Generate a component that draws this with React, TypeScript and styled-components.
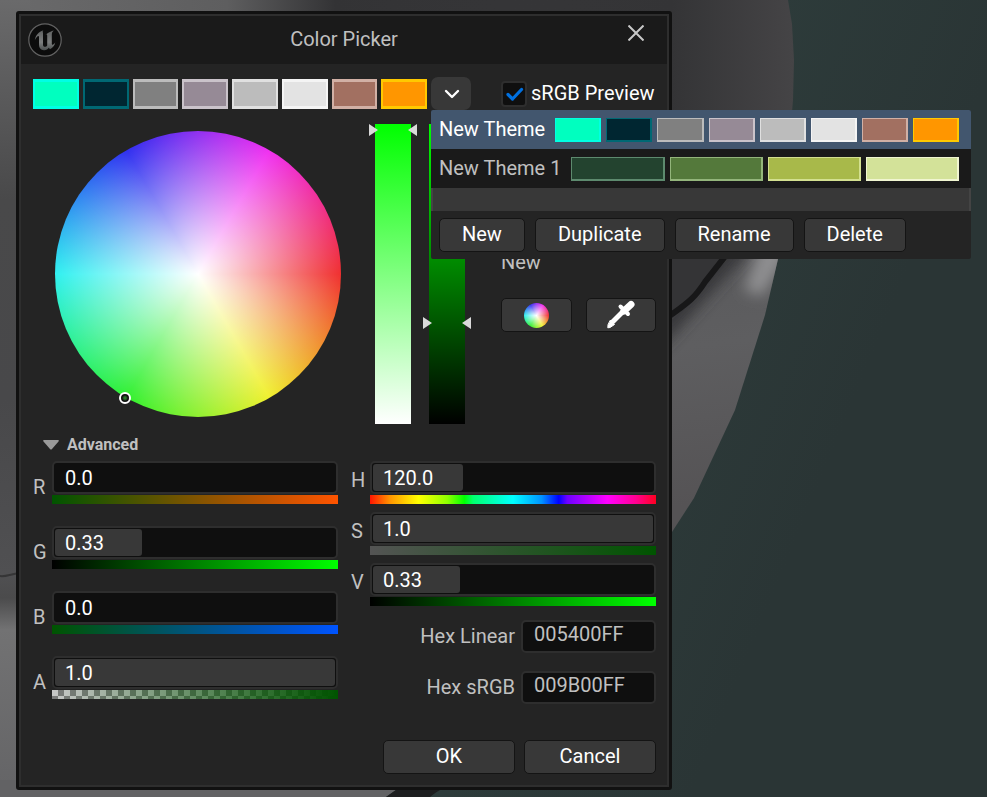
import React, { useId, useState } from "react";
import styled, { createGlobalStyle } from "styled-components";

const GlobalStyle = createGlobalStyle`
  *, *::before, *::after { box-sizing: border-box; }
  body {
    margin: 0;
    background: #2c3838;
    color: #c0c0c0;
    font: 20px/24px Roboto, "Liberation Sans", sans-serif;
  }
  button, input { font: inherit; color: inherit; }
`;

const WHEEL =
  "radial-gradient(closest-side, #fff, rgba(255, 255, 255, 0)), conic-gradient(from 90deg, #f03030, #f0f030, #30f030, #30f0f0, #3030f0, #f030f0, #f03030)";

const Page = styled.main`
  position: relative;
  min-height: 100vh;
  padding: 11px 315px 7px 16px;
  overflow: hidden;
`;

const Backdrop = styled.svg`
  position: absolute;
  inset: 0;
  width: 100%;
  height: 100%;
`;

const Dialog = styled.section`
  position: relative;
  min-width: 600px;
  border: 3px solid #111;
  border-radius: 3px;
  background: #111;
`;

const DialogInner = styled.div`
  border: 2px solid #2e2e2e;
  background: #242424;
`;

const TitleBar = styled.header`
  display: grid;
  grid-template-columns: 1fr auto 1fr;
  align-items: center;
  height: 48px;
  padding: 0 7px;
  background: #1a1a1a;
`;

const Title = styled.h1`
  margin: 0;
  padding-bottom: 2px;
  font-size: 20px;
  font-weight: 400;
`;

const CloseButton = styled.button`
  display: grid;
  place-items: center;
  justify-self: end;
  align-self: start;
  width: 48px;
  height: 34px;
  padding: 0;
  border: 0;
  background: none;
  color: #c8c8c8;
`;

const Body = styled.div`
  padding: 13px 11px 11px 12px;
`;

const TopRow = styled.div`
  display: grid;
  grid-template-columns: 1fr 155px;
  column-gap: 30px;
`;

const ThemeBar = styled.div`
  display: flex;
  align-items: center;
  gap: 4px;
`;

const SwatchList = styled.div<{ $gap: number }>`
  display: flex;
  flex: 1;
  gap: ${(p) => p.$gap}px;
`;

const Swatch = styled.button<{ $fill: string; $edge: string; $small?: boolean }>`
  flex: 1;
  min-width: 0;
  height: ${(p) => (p.$small ? 24 : 30)}px;
  padding: 0;
  border: solid ${(p) => p.$edge};
  border-width: ${(p) => (p.$small ? "1px 2px 2px 1px" : "3px 2px")};
  background: ${(p) => p.$fill};
`;

const MenuAnchor = styled.div`
  position: relative;
  z-index: 2;
`;

const ArrowButton = styled.button`
  display: grid;
  place-items: center;
  width: 40px;
  height: 33px;
  padding: 0;
  border: 0;
  border-radius: 7px;
  background: #383838;
  color: #fff;
`;

const Menu = styled.div`
  position: absolute;
  top: 100%;
  left: 0;
  width: 540px;
  border-radius: 2px;
  overflow: hidden;
  background: #242424;
`;

const MenuRow = styled.div<{ $active?: boolean }>`
  display: flex;
  align-items: center;
  gap: 10px;
  height: 39px;
  padding: 0 12px 0 8px;
  background: ${(p) => (p.$active ? "#42566e" : "#1a1a1a")};
  color: ${(p) => (p.$active ? "#fff" : "#c0c0c0")};
`;

const MenuName = styled.span`
  padding-bottom: 2px;
`;

const MenuSpacer = styled.div`
  height: 23px;
  border: solid #444;
  border-width: 0 2px;
  background: #383838;
`;

const MenuFooter = styled.div`
  display: flex;
  gap: 10px;
  padding: 7px 8px;
`;

const Button = styled.button<{ $wide?: boolean }>`
  display: grid;
  place-items: center;
  height: 34px;
  width: ${(p) => (p.$wide ? "132px" : "auto")};
  padding: 0 ${(p) => (p.$wide ? 0 : 22)}px 2px;
  border: 1px solid #141414;
  border-radius: 5px;
  background: #383838;
  color: #fff;
`;

const ToolButton = styled(Button)`
  padding: 0;
`;

const CheckLabel = styled.label`
  display: flex;
  align-items: center;
  gap: 4px;
  color: #fff;
  white-space: nowrap;
`;

const CheckText = styled.span`
  padding-bottom: 2px;
`;

const CheckBox = styled.span`
  display: grid;
  place-items: center;
  width: 26px;
  height: 26px;
  > * {
    grid-area: 1 / 1;
  }
  > svg {
    pointer-events: none;
  }
`;

const CheckInput = styled.input`
  appearance: none;
  width: 26px;
  height: 26px;
  margin: 0;
  border: 2px solid #2e2e2e;
  border-radius: 4px;
  background: #0f0f0f;
  &:not(:checked) + svg {
    visibility: hidden;
  }
`;

const PickArea = styled.div`
  display: grid;
  grid-template-columns: 1fr 155px;
  column-gap: 30px;
  margin-top: 14px;
`;

const WheelAndBars = styled.div`
  display: grid;
  grid-template-columns: 1fr 48px 48px;
  column-gap: 6px;
`;

const WheelCell = styled.div`
  display: grid;
  place-items: center;
`;

const Wheel = styled.div`
  position: relative;
  width: 286px;
  height: 286px;
  border-radius: 50%;
  background: ${WHEEL};
`;

const WheelMarker = styled.span`
  position: absolute;
  width: 12px;
  height: 12px;
  margin: -6px;
  border: 2px solid #fff;
  border-radius: 50%;
  background: radial-gradient(circle, #2a7a2a 1px, #101010 3px);
`;

const VerticalRange = styled.input<{ $from: string; $to: string }>`
  appearance: none;
  writing-mode: vertical-lr;
  direction: rtl;
  width: 48px;
  height: 300px;
  margin: 0;
  background: linear-gradient(${(p) => p.$from}, ${(p) => p.$to}) center / 36px 100% no-repeat;
  &::-webkit-slider-thumb {
    appearance: none;
    width: 48px;
    height: 12px;
    background: #dadada;
    clip-path: polygon(0 0, 9px 50%, 39px 50%, 100% 0, 100% 100%, 39px 50%, 9px 50%, 0 100%);
  }
`;

const SideTools = styled.div`
  display: flex;
  flex-direction: column;
`;

const Preview = styled.div`
  height: 120px;
  margin-bottom: 6px;
  background: #009b00;
`;

const ToolRow = styled.div`
  display: grid;
  grid-template-columns: 1fr 1fr;
  gap: 14px;
  margin-top: 24px;
`;

const MiniWheel = styled.span`
  width: 25px;
  height: 25px;
  border-radius: 50%;
  background: ${WHEEL};
`;

const Disclosure = styled.button`
  display: flex;
  align-items: center;
  gap: 8px;
  margin: 9px 0 4px;
  padding: 0 0 0 10px;
  border: 0;
  background: none;
  font-size: 16px;
  font-weight: 700;
  line-height: 24px;
`;

const Fields = styled.div`
  display: grid;
  grid-template-columns: 1fr 1fr;
  column-gap: 13px;
  align-items: start;
`;

const FieldColumn = styled.div<{ $gap: number }>`
  display: flex;
  flex-direction: column;
  gap: ${(p) => p.$gap}px;
`;

const FieldRow = styled.div`
  display: grid;
  grid-template-columns: 19px 1fr;
`;

const FieldLabel = styled.label<{ $drop: number }>`
  padding-top: ${(p) => p.$drop}px;
`;

const ValueBox = styled.div`
  display: grid;
  align-items: center;
  height: 33px;
  margin-bottom: 1px;
  padding: 1px;
  border: 2px solid #2e2e2e;
  border-radius: 5px;
  background: #0f0f0f;
  > * {
    grid-area: 1 / 1;
  }
`;

const ValueFill = styled.span`
  height: 27px;
  border-radius: 3px;
  background: #383838;
`;

const ValueInput = styled.input`
  width: 100%;
  height: 27px;
  padding: 0 10px;
  border: 0;
  outline: 0;
  background: none;
  color: #fff;
`;

const Ramp = styled.div<{ $image: string }>`
  height: 9px;
  background: ${(p) => p.$image};
`;

const HexGroup = styled.div`
  display: flex;
  flex-direction: column;
  gap: 18px;
  margin-top: 6px;
`;

const HexRow = styled.div`
  display: flex;
  justify-content: flex-end;
  align-items: center;
  gap: 6px;
`;

const HexLabel = styled.label`
  padding-bottom: 2px;
`;

const HexInput = styled.input`
  width: 135px;
  height: 33px;
  padding: 0 11px 5px;
  border: 2px solid #2e2e2e;
  border-radius: 5px;
  outline: 0;
  background: #0f0f0f;
`;

const Actions = styled.footer`
  display: flex;
  justify-content: flex-end;
  gap: 9px;
  margin-top: 36px;
`;

type Pair = [fill: string, edge: string];

const themeOne: Pair[] = [
  ["#00ffbf", "#00ffe4"],
  ["#002631", "#006873"],
  ["#808080", "#bcbcbc"],
  ["#968a96", "#cac3ca"],
  ["#bcbcbc", "#e0e0e0"],
  ["#e3e3e3", "#f4f4f4"],
  ["#a27061", "#d1b0a5"],
  ["#ff9600", "#ffc900"],
];

const themeTwo: Pair[] = [
  ["#23432f", "#5d8a6e"],
  ["#54793b", "#93b57b"],
  ["#a8b94a", "#d3e090"],
  ["#d3e299", "#f0f5d0"],
];

interface Channel {
  name: string;
  value: string;
  fill: number;
  ramp: string;
}

const rgba: Channel[] = [
  { name: "R", value: "0.0", fill: 0, ramp: "linear-gradient(90deg, #005400, #ff5400)" },
  { name: "G", value: "0.33", fill: 31, ramp: "linear-gradient(90deg, #000, #0f0)" },
  { name: "B", value: "0.0", fill: 0, ramp: "linear-gradient(90deg, #005400, #0054ff)" },
  {
    name: "A",
    value: "1.0",
    fill: 100,
    ramp: "linear-gradient(90deg, rgba(0, 84, 0, 0), #005400), repeating-conic-gradient(#7c7c7c 0 25%, #c8c8c8 0 50%) 0 0 / 12px 12px",
  },
];

const hsv: Channel[] = [
  {
    name: "H",
    value: "120.0",
    fill: 32,
    ramp: "linear-gradient(90deg, #ff1500, #ff9500 7%, #ff0 17%, #90ff00 27%, #0f0 33%, #00ff6e 36%, #0ff 50%, #0093ff 60%, #00f 66%, #6e00ff 69%, #f0f 83%, #ff0090 93%, #ff0020)",
  },
  { name: "S", value: "1.0", fill: 100, ramp: "linear-gradient(90deg, #545454, #005400)" },
  { name: "V", value: "0.33", fill: 31, ramp: "linear-gradient(90deg, #000, #0f0)" },
];

function Swatches({ colors, small }: { colors: Pair[]; small?: boolean }) {
  return (
    <SwatchList $gap={small ? 5 : 4}>
      {colors.map(([fill, edge]) => (
        <Swatch key={fill} $fill={fill} $edge={edge} $small={small} aria-label={fill} />
      ))}
    </SwatchList>
  );
}

function ChannelField({ channel, labelDrop }: { channel: Channel; labelDrop: number }) {
  const id = useId();
  return (
    <FieldRow>
      <FieldLabel htmlFor={id} $drop={labelDrop}>
        {channel.name}
      </FieldLabel>
      <div>
        <ValueBox>
          {channel.fill > 0 && <ValueFill style={{ width: `${channel.fill}%` }} />}
          <ValueInput id={id} defaultValue={channel.value} />
        </ValueBox>
        <Ramp $image={channel.ramp} />
      </div>
    </FieldRow>
  );
}

function HexField({ name, value }: { name: string; value: string }) {
  const id = useId();
  return (
    <HexRow>
      <HexLabel htmlFor={id}>{name}</HexLabel>
      <HexInput id={id} defaultValue={value} />
    </HexRow>
  );
}

function Logo() {
  return (
    <svg width="34" height="34" viewBox="0 0 34 34" aria-hidden="true">
      <defs>
        <linearGradient id="logoMetal" x1="0" y1="0" x2="0" y2="1">
          <stop offset="0" stopColor="#606262" />
          <stop offset="0.6" stopColor="#7c7e7e" />
          <stop offset="1" stopColor="#4c5050" />
        </linearGradient>
      </defs>
      <circle cx="17" cy="17" r="16.2" fill="#0c0c0c" stroke="#626262" strokeWidth="1.2" />
      <path
        fill="url(#logoMetal)"
        d="M6.8 17.2C7.6 12.4 10.6 8.6 15.4 7.2C14.6 8 14.6 8.8 15 9.8V21.4C15 23 15.6 23.8 17 23.8C18 23.8 18.8 23.2 19.2 22.4V12.8C19.2 11.8 18.6 11.2 17.6 11.4C19.6 10.6 20.4 9 25.8 7.4C24.4 8.6 23.8 9.8 23.8 11.6V20.4C23.8 21.6 24.4 22 25.2 21.4C26 21 26.6 20.2 27.2 19.4C26.6 22.6 24.8 24.6 22 26.2L20.8 24.8C19.6 26.6 18.2 27.4 15.8 27.2C12.6 26.8 11 25 11 22V14.2C11 13 10.4 12.8 9.4 13.4C8.4 14.2 7.6 15.4 6.8 17.2Z"
      />
    </svg>
  );
}

function Eyedropper() {
  return (
    <svg width="30" height="30" viewBox="0 0 30 30" fill="none" stroke="#fff" strokeLinecap="round" aria-hidden="true">
      <path d="M18 11L25 4.5" strokeWidth="7" />
      <path d="M14.5 6.5L22 14" strokeWidth="4" />
      <path d="M16.5 12L6.5 22" strokeWidth="5" />
      <path d="M4.5 20.5L8.5 24.5L4 27.5L1.8 27.8L2 25Z" fill="#fff" strokeWidth="1" />
    </svg>
  );
}

function Scene() {
  return (
    <Backdrop viewBox="0 0 987 797" preserveAspectRatio="xMinYMin slice" aria-hidden="true">
      <defs>
        <linearGradient id="teal" x1="0.7" y1="0" x2="1" y2="0.1">
          <stop offset="0" stopColor="#2e3d3c" />
          <stop offset="1" stopColor="#2a3535" />
        </linearGradient>
        <linearGradient id="shell" x1="672" y1="0" x2="794" y2="0" gradientUnits="userSpaceOnUse">
          <stop offset="0" stopColor="#343436" />
          <stop offset="1" stopColor="#454446" />
        </linearGradient>
        <linearGradient id="topEdge" x1="0" y1="0" x2="987" y2="0" gradientUnits="userSpaceOnUse">
          <stop offset="0" stopColor="#6a6a6b" />
          <stop offset="0.23" stopColor="#5e5e5f" />
          <stop offset="0.34" stopColor="#333335" />
          <stop offset="0.68" stopColor="#39393b" stopOpacity="0" />
        </linearGradient>
        <linearGradient id="leftEdge" x1="0" y1="0" x2="0" y2="797" gradientUnits="userSpaceOnUse">
          <stop offset="0" stopColor="#6a6a6b" />
          <stop offset="0.25" stopColor="#49494a" />
          <stop offset="0.5" stopColor="#48484a" />
          <stop offset="0.72" stopColor="#505052" />
          <stop offset="0.75" stopColor="#4b4b4c" />
          <stop offset="0.79" stopColor="#727273" />
          <stop offset="1" stopColor="#646466" />
        </linearGradient>
        <linearGradient id="lower" x1="700" y1="260" x2="730" y2="500" gradientUnits="userSpaceOnUse">
          <stop offset="0" stopColor="#5a5a5c" />
          <stop offset="0.35" stopColor="#5e5e60" />
          <stop offset="1" stopColor="#555355" />
        </linearGradient>
        <filter id="soft" x="-80%" y="-80%" width="260%" height="260%">
          <feGaussianBlur stdDeviation="7" />
        </filter>
        <clipPath id="lowerClip">
          <path d="M660 240H781L778 259L765 315L735 410L694 498L672 532L660 550Z" />
        </clipPath>
      </defs>
      <rect width="987" height="797" fill="url(#teal)" />
      <path d="M0 0H788L792 24L794 60L793 100L781 250H0Z" fill="url(#shell)" />
      <rect width="672" height="30" fill="url(#topEdge)" />
      <rect width="30" height="797" fill="url(#leftEdge)" />
      <path d="M0 576C6 577 10 574 20 573" fill="none" stroke="#353536" strokeWidth="2" />
      <g clipPath="url(#lowerClip)">
        <rect x="660" y="240" width="130" height="310" fill="url(#lower)" />
        <path d="M660 350L755 245H660Z" fill="#39393b" filter="url(#soft)" />
        <path d="M762 240L744 290L762 296L784 262L788 240Z" fill="#8e8e90" filter="url(#soft)" />
        <path d="M660 240H735L697 293L672 316H660Z" fill="#343436" />
        <path d="M665 319C690 302 696 296 705 282L727 254" fill="none" stroke="#171718" strokeWidth="6" />
      </g>
      <path d="M0 780H410L386 797H0Z" fill="#626264" />
      <path d="M410 780H462C450 785 438 790 430 797H386Z" fill="#1d1e1f" />
    </Backdrop>
  );
}

export default function App() {
  const [menuOpen, setMenuOpen] = useState(true);
  const [advanced, setAdvanced] = useState(true);

  return (
    <>
      <GlobalStyle />
      <Page>
        <Scene />
        <Dialog role="dialog" aria-labelledby="pickerTitle">
          <DialogInner>
            <TitleBar>
              <Logo />
              <Title id="pickerTitle">Color Picker</Title>
              <CloseButton aria-label="Close">
                <svg width="16" height="16" viewBox="0 0 16 16" stroke="currentColor" strokeWidth="2">
                  <path d="M0.5 0.5L15.5 15.5M15.5 0.5L0.5 15.5" />
                </svg>
              </CloseButton>
            </TitleBar>
            <Body>
              <TopRow>
                <ThemeBar>
                  <Swatches colors={themeOne} />
                  <MenuAnchor>
                    <ArrowButton aria-label="Color themes" aria-expanded={menuOpen} onClick={() => setMenuOpen(!menuOpen)}>
                      <svg width="18" height="10" viewBox="0 0 18 10" fill="none" stroke="currentColor" strokeWidth="2.4" strokeLinecap="round" strokeLinejoin="round">
                        <path d="M4 2L10 8L16 2" />
                      </svg>
                    </ArrowButton>
                    {menuOpen && (
                      <Menu>
                        <MenuRow $active>
                          <MenuName>New Theme</MenuName>
                          <Swatches colors={themeOne} small />
                        </MenuRow>
                        <MenuRow>
                          <MenuName>New Theme 1</MenuName>
                          <Swatches colors={themeTwo} small />
                        </MenuRow>
                        <MenuSpacer />
                        <MenuFooter>
                          <Button>New</Button>
                          <Button>Duplicate</Button>
                          <Button>Rename</Button>
                          <Button>Delete</Button>
                        </MenuFooter>
                      </Menu>
                    )}
                  </MenuAnchor>
                </ThemeBar>
                <CheckLabel>
                  <CheckBox>
                    <CheckInput type="checkbox" defaultChecked />
                    <svg width="20" height="14" viewBox="0 0 20 14" fill="none" stroke="#0070e0" strokeWidth="3.2" strokeLinecap="round" strokeLinejoin="round">
                      <path d="M4 7.5L8.5 12L17.5 2.5" />
                    </svg>
                  </CheckBox>
                  <CheckText>sRGB Preview</CheckText>
                </CheckLabel>
              </TopRow>

              <PickArea>
                <WheelAndBars>
                  <WheelCell>
                    <Wheel role="img" aria-label="Color wheel">
                      <WheelMarker style={{ left: "24.5%", top: "93.5%" }} />
                    </Wheel>
                  </WheelCell>
                  <VerticalRange type="range" aria-label="Saturation" defaultValue={100} $from="#0f0" $to="#fff" />
                  <VerticalRange type="range" aria-label="Value" defaultValue={33} $from="#0f0" $to="#000" />
                </WheelAndBars>
                <SideTools>
                  <Preview />
                  <span>New</span>
                  <ToolRow>
                    <ToolButton aria-label="Toggle wheel">
                      <MiniWheel />
                    </ToolButton>
                    <ToolButton aria-label="Pick from screen">
                      <Eyedropper />
                    </ToolButton>
                  </ToolRow>
                </SideTools>
              </PickArea>

              <Disclosure aria-expanded={advanced} onClick={() => setAdvanced(!advanced)}>
                <svg width="16" height="10" viewBox="0 0 16 10" fill="#9a9a9a" aria-hidden="true">
                  <path d="M1 0H15Q16.5 0.5 15.5 1.5L9 9Q8 10 7 9L0.5 1.5Q-0.5 0.5 1 0Z" />
                </svg>
                Advanced
              </Disclosure>

              {advanced && (
                <Fields>
                  <FieldColumn $gap={22}>
                    {rgba.map((c) => (
                      <ChannelField key={c.name} channel={c} labelDrop={14} />
                    ))}
                  </FieldColumn>
                  <FieldColumn $gap={8}>
                    {hsv.map((c) => (
                      <ChannelField key={c.name} channel={c} labelDrop={7} />
                    ))}
                    <HexGroup>
                      <HexField name="Hex Linear" value="005400FF" />
                      <HexField name="Hex sRGB" value="009B00FF" />
                    </HexGroup>
                  </FieldColumn>
                </Fields>
              )}

              <Actions>
                <Button $wide>OK</Button>
                <Button $wide>Cancel</Button>
              </Actions>
            </Body>
          </DialogInner>
        </Dialog>
      </Page>
    </>
  );
}
